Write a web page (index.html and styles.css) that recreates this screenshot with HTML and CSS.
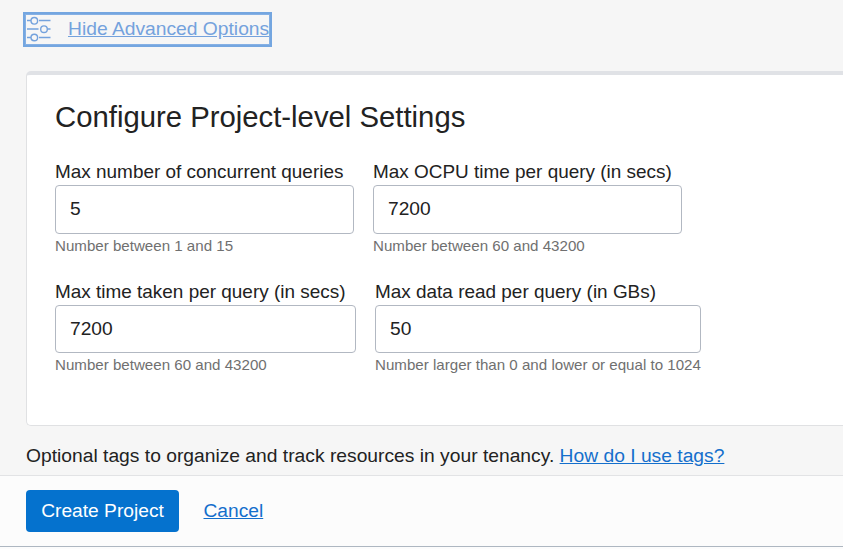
FILE: index.html
```html
<!DOCTYPE html>
<html lang="en">
<head>
<meta charset="utf-8">
<title>Create Project</title>
<link rel="stylesheet" href="styles.css">
</head>
<body>
<main class="content">
  <a class="toggle" href="#">
    <svg class="toggle-icon" width="24" height="26" viewBox="0 0 24 26" fill="none" stroke="currentColor" stroke-width="1.4">
      <path d="M0 4.5h4M12 4.5h11.5M0 13h11.5M20.5 13h3M0 21.5h4M12 21.5h11.5"/>
      <circle cx="7.3" cy="4.8" r="3.3"/>
      <circle cx="17" cy="13.2" r="3.3"/>
      <circle cx="7.3" cy="21.5" r="3.3"/>
    </svg>
    <span class="toggle-text">Hide Advanced Options</span>
  </a>
  <section class="panel">
    <h1 class="title">Configure Project-level Settings</h1>
    <div class="row">
      <div class="field field-queries">
        <label class="label" for="queries">Max number of concurrent queries</label>
        <input class="input" id="queries" value="5">
        <p class="hint">Number between 1 and 15</p>
      </div>
      <div class="field field-ocpu">
        <label class="label" for="ocpu">Max OCPU time per query (in secs)</label>
        <input class="input" id="ocpu" value="7200">
        <p class="hint">Number between 60 and 43200</p>
      </div>
    </div>
    <div class="row row-second">
      <div class="field field-time">
        <label class="label" for="time">Max time taken per query (in secs)</label>
        <input class="input" id="time" value="7200">
        <p class="hint">Number between 60 and 43200</p>
      </div>
      <div class="field field-data">
        <label class="label" for="data">Max data read per query (in GBs)</label>
        <input class="input" id="data" value="50">
        <p class="hint">Number larger than 0 and lower or equal to 1024</p>
      </div>
    </div>
  </section>
  <p class="tags">Optional tags to organize and track resources in your tenancy. <a class="link" href="#">How do I use tags?</a></p>
</main>
<footer class="footer">
  <button class="button">Create Project</button>
  <a class="link" href="#">Cancel</a>
</footer>
</body>
</html>
```
FILE: styles.css
```css
* { box-sizing: border-box; }
body {
  margin: 0;
  height: 549px;
  overflow: hidden;
  background: #fcfcfc;
  color: #222;
  font: 19.2px/24px "Liberation Sans", Arial, sans-serif;
}
.content {
  height: 476px;
  padding: 12px 0 0 23px;
  background: #f6f6f6;
  border-bottom: 1px solid #e2e3e5;
}
.toggle {
  display: flex;
  width: 249px;
  height: 35px;
  padding: 3px 0 0 2px;
  border: 2px solid #74a6e0;
  outline: 1px solid #85b0e4;
  outline-offset: -3px;
  color: #74a2dd;
  text-decoration: none;
}
.toggle-icon { margin-top: -1px; }
.toggle-text {
  margin-left: 17px;
  font-size: 19.25px;
  text-decoration: underline;
  white-space: nowrap;
}
.panel {
  height: 355px;
  margin: 24px 0 0 3px;
  padding: 25px 0 0 28px;
  background: #fff;
  border: 1px solid #e0e1e3;
  border-top: 4px solid #e0e2e6;
  border-right: 0;
  border-radius: 5px 0 0 5px;
}
.title {
  margin: 0;
  font-size: 29.3px;
  font-weight: 400;
  line-height: 34px;
}
.row { display: flex; gap: 19px; margin-top: 26px; }
.row-second { margin-top: 24px; }
.field-queries { width: 299px; }
.field-ocpu { width: 309px; }
.field-time { width: 301px; }
.field-data { width: 326px; }
.label { display: block; height: 25px; font-size: 18.95px; white-space: nowrap; }
.input {
  display: block;
  width: 100%;
  height: 49px;
  padding: 0 14px 2px;
  border: 1px solid #b2b8c2;
  border-radius: 4px;
  background: #fff;
  color: #222;
  font: inherit;
  outline: 0;
}
.row-second .input { height: 48px; padding-bottom: 0; }
.hint {
  margin: 2px 0 0;
  color: #707070;
  font-size: 15.12px;
  line-height: 20px;
  white-space: nowrap;
}
.tags { margin: 18px 0 0 3px; font-size: 19.25px; }
.link { color: #146fcc; text-decoration: underline; }
.footer {
  display: flex;
  gap: 24.5px;
  height: 71px;
  padding: 14px 0 0 26px;
  border-bottom: 1px solid #aeb7c1;
}
.footer .link { margin-top: 9px; }
.button {
  width: 153px;
  height: 42px;
  padding: 0;
  border: 0;
  border-radius: 4px;
  background: #0572ce;
  color: #fff;
  font: inherit;
}
```
